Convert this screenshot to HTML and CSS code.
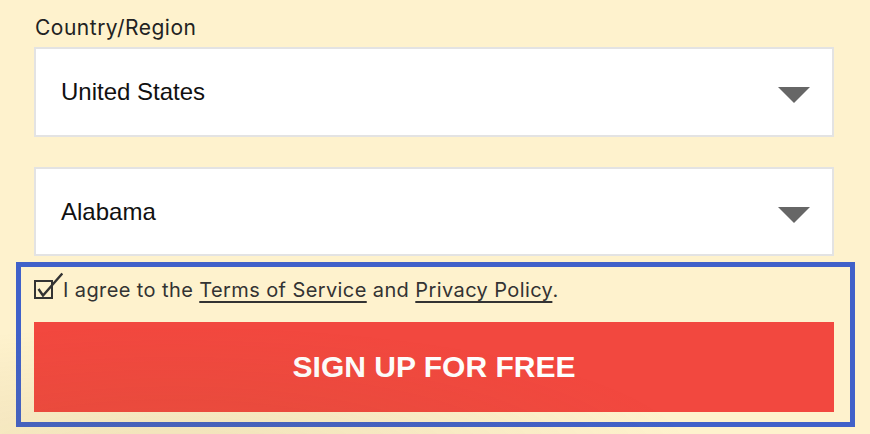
FILE: index.html
```html
<!DOCTYPE html>
<html lang="en">
<head>
<meta charset="utf-8">
<title>Sign up</title>
<link rel="stylesheet" href="styles.css">
</head>
<body>
<div class="page">
  <div class="fields">
    <div class="label">Country/Region</div>
    <div class="select">
      <span class="value">United States</span>
      <span class="caret"></span>
    </div>
    <div class="select second">
      <span class="value">Alabama</span>
      <span class="caret"></span>
    </div>
  </div>
  <div class="highlight">
    <div class="agree">
      <svg class="check" width="29" height="28" viewBox="0 0 29 28" aria-hidden="true">
        <rect x="1" y="9" width="17" height="17" fill="none" stroke="#333" stroke-width="2"/>
        <polyline points="4.5,17 9,23.5 28.3,1.5" fill="none" stroke="#333" stroke-width="2.4" stroke-linejoin="miter"/>
      </svg>
      <span class="agree-text">I agree to the <a href="#" class="link">Terms of Service</a> and <a href="#" class="link">Privacy Policy</a>.</span>
    </div>
    <button class="signup" type="button">SIGN UP FOR FREE</button>
  </div>
</div>
<div class="vignette"></div>
</body>
</html>
```

FILE: styles.css
```css
html, body {
  margin: 0;
  padding: 0;
}
body {
  background: #fef2cd;
  width: 870px;
  height: 434px;
  overflow: hidden;
  font-family: Inter, "Noto Sans", sans-serif;
}
.page {
  display: flex;
  flex-direction: column;
}
.fields {
  display: flex;
  flex-direction: column;
  padding: 16px 36px 0 34px;
}
.label {
  font-size: 21px;
  line-height: 24px;
  letter-spacing: 0.5px;
  color: #222;
  margin-left: 1px;
  margin-bottom: 7px;
}
.select {
  box-sizing: border-box;
  height: 90px;
  width: 800px;
  background: #fff;
  border: 2px solid #e3e3e3;
  display: flex;
  align-items: center;
  justify-content: space-between;
  padding: 0 22px 0 25px;
}
.select.second {
  margin-top: 30px;
  height: 89px;
}
.value {
  font-family: "Liberation Sans", Arial, sans-serif;
  font-size: 24px;
  color: #111;
}
.caret {
  width: 0;
  height: 0;
  border-left: 16px solid transparent;
  border-right: 16px solid transparent;
  border-top: 16px solid #666;
  margin-top: 6px;
}
.highlight {
  margin: 6px 15px 0 16px;
  border: 5px solid #4061c9;
  padding: 7px 16px 10px 13px;
  display: flex;
  flex-direction: column;
}
.agree {
  display: flex;
  align-items: flex-end;
  height: 32px;
  margin-bottom: 16px;
}
.check {
  display: block;
  flex: none;
  margin-bottom: 6px;
  margin-left: 0;
}
.agree-text {
  font-size: 20px;
  line-height: 32px;
  letter-spacing: 0.4px;
  color: #333;
  white-space: nowrap;
}
.link {
  color: #333;
  text-decoration: underline;
  text-decoration-thickness: 1.5px;
  text-underline-offset: 4px;
}
.signup {
  height: 90px;
  width: 800px;
  border: none;
  background: #f2483f;
  color: #fff;
  font-family: "Liberation Sans", Arial, sans-serif;
  font-weight: bold;
  font-size: 30px;
  padding: 0;
  cursor: pointer;
}
.vignette {
  position: fixed;
  inset: 0;
  pointer-events: none;
  background: radial-gradient(ellipse 60% 30% at 20% 105%, rgba(140, 110, 40, 0.12), rgba(140, 110, 40, 0) 100%);
}
```
